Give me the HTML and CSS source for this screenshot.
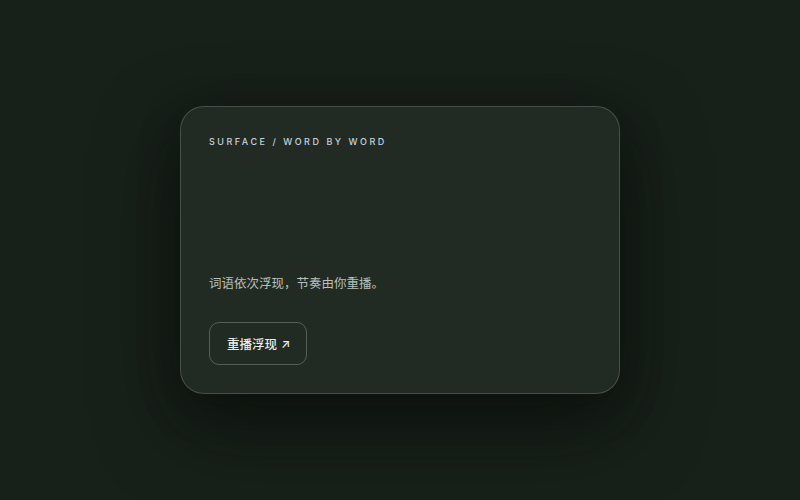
FILE: index.html
```html
<!DOCTYPE html>
<html lang="zh">
<head>
<meta charset="utf-8">
<link rel="stylesheet" href="styles.css">
</head>
<body>
<main class="stage">
  <section class="card">
    <div class="label">SURFACE / WORD BY WORD</div>
    <p class="text">词语依次浮现，节奏由你重播。</p>
    <button class="btn">重播浮现 <span class="arrow">↗</span></button>
  </section>
</main>
</body>
</html>
```
FILE: styles.css
```css
html, body {
  margin: 0;
  height: 100%;
}
body {
  background: #18201a;
  font-family: Inter, "Noto Sans CJK SC", sans-serif;
}
.stage {
  height: 500px;
  display: flex;
  align-items: center;
  justify-content: center;
}
.card {
  box-sizing: border-box;
  width: 440px;
  height: 288px;
  padding: 29px 28px 28px;
  border-radius: 24px;
  background: #222a24;
  border: 1px solid rgba(200, 215, 200, 0.22);
  box-shadow: 0 30px 80px rgba(5, 10, 6, 0.55), 0 10px 40px rgba(5, 10, 6, 0.3);
  display: flex;
  flex-direction: column;
  align-items: flex-start;
}
.label {
  font-size: 9px;
  font-weight: 500;
  letter-spacing: 0.28em;
  color: #c6d3de;
  line-height: 12px;
}
.text {
  margin: auto 0 0;
  font-size: 12.5px;
  line-height: 20px;
  color: #b9c0b8;
}
.btn {
  margin-top: 28px;
  height: 43px;
  padding: 0 16px 0 17px;
  border-radius: 10px;
  border: 1px solid rgba(200, 215, 200, 0.3);
  background: transparent;
  color: #e9eee8;
  font-family: inherit;
  font-size: 12.5px;
  font-weight: 500;
  display: flex;
  align-items: center;
  gap: 4px;
}
.arrow {
  font-size: 12px;
}
```
